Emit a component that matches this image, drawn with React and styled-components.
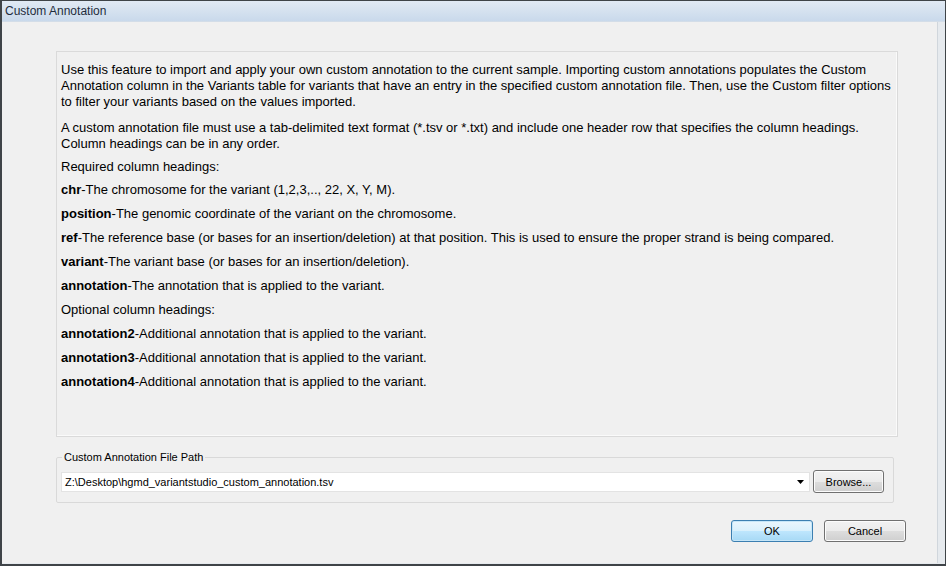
import React from 'react'
import styled, { createGlobalStyle } from 'styled-components'

const GlobalStyle = createGlobalStyle`
  html, body {
    margin: 0;
    padding: 0;
    background: #f0f0f0;
  }
  * {
    box-sizing: border-box;
  }
`

const fields = [
  { name: 'chr', text: 'The chromosome for the variant (1,2,3,.., 22, X, Y, M).' },
  { name: 'position', text: 'The genomic coordinate of the variant on the chromosome.' },
  { name: 'ref', text: 'The reference base (or bases for an insertion/deletion) at that position. This is used to ensure the proper strand is being compared.' },
  { name: 'variant', text: 'The variant base (or bases for an insertion/deletion).' },
  { name: 'annotation', text: 'The annotation that is applied to the variant.' },
]

const optional = [
  { name: 'annotation2', text: 'Additional annotation that is applied to the variant.' },
  { name: 'annotation3', text: 'Additional annotation that is applied to the variant.' },
  { name: 'annotation4', text: 'Additional annotation that is applied to the variant.' },
]

function App() {
  return (
    <>
      <GlobalStyle />
      <Window>
        <TitleBar>Custom Annotation</TitleBar>
        <Body>
          <InfoPanel>
            <Para $gap={10}>
              Use this feature to import and apply your own custom annotation to the current sample. Importing custom annotations populates the Custom<br />
              Annotation column in the Variants table for variants that have an entry in the specified custom annotation file. Then, use the Custom filter options<br />
              to filter your variants based on the values imported.
            </Para>
            <Para $gap={7}>
              A custom annotation file must use a tab-delimited text format (*.tsv or *.txt) and include one header row that specifies the column headings.<br />
              Column headings can be in any order.
            </Para>
            <Para $gap={7}>Required column headings:</Para>
            {fields.map((f) => (
              <Para key={f.name}>
                <b>{f.name}</b>-{f.text}
              </Para>
            ))}
            <Para>Optional column headings:</Para>
            {optional.map((f) => (
              <Para key={f.name}>
                <b>{f.name}</b>-{f.text}
              </Para>
            ))}
          </InfoPanel>

          <GroupBox>
            <Legend>Custom Annotation File Path</Legend>
            <PathRow>
              <Combo>
                <ComboText>Z:\Desktop\hgmd_variantstudio_custom_annotation.tsv</ComboText>
                <Arrow width="7" height="4" viewBox="0 0 7 4">
                  <path d="M0 0 H7 L3.5 4 Z" fill="#000" />
                </Arrow>
              </Combo>
              <Button $w={71} $h={23}>Browse...</Button>
            </PathRow>
          </GroupBox>

          <Footer>
            <Button $w={82} $h={22} $primary>OK</Button>
            <Button $w={82} $h={22}>Cancel</Button>
          </Footer>
        </Body>
      </Window>
    </>
  )
}

export default App

const Window = styled.div`
  width: 946px;
  height: 566px;
  display: flex;
  flex-direction: column;
  border: 1px solid #3f4448;
  border-left-width: 2px;
  border-bottom-width: 2px;
  background: #f0f0f0;
  font-family: "Liberation Sans", Arial, sans-serif;
  overflow: hidden;
`

const TitleBar = styled.div`
  height: 21px;
  flex: none;
  display: flex;
  align-items: center;
  padding-left: 3px;
  font-size: 12px;
  color: #1f2d3d;
  background: linear-gradient(#e1eaf4, #c9d9eb);
  border-bottom: 1px solid #d3dde8;
`

const Body = styled.div`
  flex: 1;
  display: flex;
  flex-direction: column;
  padding: 29px 0 0 54px;
  border-right: 7px solid #e6eaee;
  border-bottom: 1px solid #e6eaee;
  box-shadow: inset -1px 0 0 #d0d6dc;
`

const InfoPanel = styled.div`
  width: 842px;
  height: 386px;
  padding: 10px 4px 0 4px;
  border: 1px solid #dadada;
  box-shadow: inset -1px -1px 0 #fafafa;
  font-size: 13px;
  line-height: 16px;
  color: #000;
`

const Para = styled.p`
  margin: 0 0 ${(p) => p.$gap ?? 8}px 0;
  white-space: nowrap;

  b {
    font-weight: bold;
  }
`

const GroupBox = styled.fieldset`
  width: 838px;
  margin: 14px 0 0 0;
  padding: 6px 8px 9px 4px;
  border: 1px solid #d9d9d9;
  border-radius: 2px;
  min-width: 0;
`

const Legend = styled.legend`
  margin-left: 1px;
  padding: 0 2px 0 2px;
  font-size: 11px;
  line-height: 13px;
  color: #000;
`

const PathRow = styled.div`
  display: flex;
  align-items: center;
  gap: 3px;
`

const Combo = styled.div`
  width: 749px;
  height: 20px;
  display: flex;
  align-items: center;
  justify-content: space-between;
  padding: 0 4px 0 3px;
  background: #fff;
  border: 1px solid #e3e3e3;
  font-size: 11px;
`

const ComboText = styled.span`
  color: #000;
`

const Arrow = styled.svg`
  display: block;
  margin-right: 1px;
`

const Button = styled.div`
  width: ${(p) => p.$w}px;
  height: ${(p) => p.$h}px;
  flex: none;
  display: flex;
  align-items: center;
  justify-content: center;
  font-size: 11px;
  color: #000;
  border-radius: 3px;
  border: 1px solid ${(p) => (p.$primary ? '#3c7fb1' : '#707070')};
  background: ${(p) =>
    p.$primary
      ? 'linear-gradient(#eaf6fd 0%, #d9f0fc 50%, #bee6fd 51%, #a7d9f5 100%)'
      : 'linear-gradient(#f2f2f2 0%, #ebebeb 50%, #dddddd 51%, #cfcfcf 100%)'};
  box-shadow: inset 0 0 0 1px ${(p) => (p.$primary ? '#c6e6f8' : '#fcfcfc')};
`

const Footer = styled.div`
  display: flex;
  justify-content: flex-end;
  gap: 11px;
  width: 850px;
  margin-top: 17px;
`
